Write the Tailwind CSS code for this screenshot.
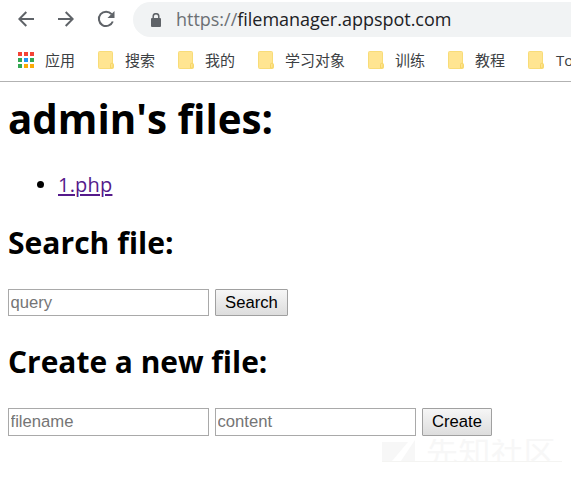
<!DOCTYPE html>
<html lang="zh-CN">
<head>
<meta charset="utf-8">
<title>filemanager</title>
<script src="https://cdn.jsdelivr.net/npm/@tailwindcss/browser@4"></script>
</head>
<body class="w-[571px] h-[478px] overflow-hidden bg-white text-black font-['Open_Sans','Noto_Sans_CJK_SC',sans-serif]">
<svg class="hidden">
  <symbol id="folder" viewBox="0 0 16 18">
    <path d="M1.500.5h12a1 1 0 0 1 1 1v10.500l1 1.500v3a1 1 0 0 1-1 1h-13a1 1 0 0 1-1-1v-15a1 1 0 0 1 1-1z" fill="#ffe591" stroke="#f8dc78"/>
    <path d="M12.500 17v-3.500a1.200 1.200 0 0 1 2.500 0V16a1 1 0 0 1-1 1z" fill="#ffe48f" stroke="#f5d565"/>
  </symbol>
</svg>
<header class="h-[82px] border-b border-[#b2b2b2]">
  <div class="flex h-[39px] items-center pl-[18px]">
    <svg class="w-4 h-4 mt-[-1px] shrink-0" viewBox="0 0 16 16" fill="none" stroke="#5f6368" stroke-width="2"><path d="M16 8H1.500M8.300 1 1.300 8l7 7"/></svg>
    <svg class="w-4 h-4 mt-[-1px] ml-6 shrink-0" viewBox="0 0 16 16" fill="none" stroke="#5f6368" stroke-width="2"><path d="M0 8h14.500M7.700 1l7 7-7 7"/></svg>
    <svg class="w-[18px] h-[18px] mt-[-1px] ml-[23px] shrink-0" viewBox="0 0 18 18"><path d="M15.800 11.500A7.200 7.200 0 1 1 14.600 4.200" fill="none" stroke="#5f6368" stroke-width="2"/><path d="M17.500 1v7h-7z" fill="#5f6368"/></svg>
    <div class="flex ml-[18px] mt-[-1px] h-[35px] flex-1 items-center rounded-l-full bg-[#f1f3f4] pl-[18px]">
      <svg class="w-[10px] h-[14px] mt-[2px] shrink-0" viewBox="0 0 10 14"><path d="M2.200 6V3.500a2.800 2.800 0 0 1 5.600 0V6" fill="none" stroke="#5f6368" stroke-width="1.500"/><rect y="5" width="10" height="9" rx="1" fill="#5f6368"/></svg>
      <div class="ml-[15px] text-[18px] leading-[24px] whitespace-nowrap text-[#202124] tracking-[-0.02px]"><span class="text-[#6c7074]">https://</span>filemanager.appspot.com</div>
    </div>
  </div>
  <nav class="flex h-[42px] items-center overflow-hidden pl-[18px] text-[15px] leading-[22px] text-[#3c4043] whitespace-nowrap">
    <div class="flex w-20 shrink-0 items-center">
      <svg class="w-4 h-4 mr-[11px] mt-[-1px]" viewBox="0 0 16 16"><path d="M0 0h4v4H0zM6 0h4v4H6zM12 0h4v4h-4z" fill="#f44336"/><path d="M0 6h4v4H0zM0 12h4v4H0zM12 6h4v4h-4z" fill="#34a853"/><path d="M6 6h4v4H6z" fill="#2196f3"/><path d="M6 12h4v4H6zM12 12h4v4h-4z" fill="#fbab08"/></svg>应用</div>
    <div class="flex w-20 shrink-0 items-center"><svg class="w-4 h-[18px] mr-[11px]"><use href="#folder"/></svg>搜索</div>
    <div class="flex w-20 shrink-0 items-center"><svg class="w-4 h-[18px] mr-[11px]"><use href="#folder"/></svg>我的</div>
    <div class="flex w-[110px] shrink-0 items-center"><svg class="w-4 h-[18px] mr-[11px]"><use href="#folder"/></svg>学习对象</div>
    <div class="flex w-20 shrink-0 items-center"><svg class="w-4 h-[18px] mr-[11px]"><use href="#folder"/></svg>训练</div>
    <div class="flex w-20 shrink-0 items-center"><svg class="w-4 h-[18px] mr-[11px]"><use href="#folder"/></svg>教程</div>
    <div class="flex w-20 shrink-0 items-center"><svg class="w-4 h-[18px] mr-[12px]"><use href="#folder"/></svg>To</div>
  </nav>
</header>
<main class="relative px-2">
  <h1 class="pt-[8px] h-[87px] text-[42px] leading-[56px] font-bold whitespace-nowrap"><span class="inline-block origin-left scale-x-[0.96]">admin's files:</span></h1>
  <ul class="h-[54px] pl-[50px] list-disc text-[20px] leading-[32px]"><li><a href="#" class="text-[#551a8b] underline underline-offset-2 tracking-[0.2px]">1.php</a></li></ul>
  <h2 class="h-[66px] text-[31px] leading-[38px] font-bold whitespace-nowrap"><span class="inline-block origin-left scale-x-[0.97]">Search file:</span></h2>
  <form class="flex h-[27px] gap-[6px] font-['Liberation_Sans',sans-serif] text-[16.67px]">
    <input placeholder="query" class="w-[201px] border border-[#a9a9a9] px-[1.500px] pt-px placeholder:text-[#757575]">
    <button type="button" class="w-[73px] border border-[#a0a0a0] rounded-[1px] bg-linear-to-b from-[#f6f6f6] to-[#dddddd]">Search</button>
  </form>
  <h2 class="mt-[26px] h-[66px] text-[31px] leading-[38px] font-bold whitespace-nowrap"><span class="inline-block origin-left scale-x-[0.965]">Create a new file:</span></h2>
  <form class="flex h-[28px] gap-[6px] font-['Liberation_Sans',sans-serif] text-[16.67px]">
    <input placeholder="filename" class="w-[201px] border border-[#a9a9a9] px-[1.500px] placeholder:text-[#757575]">
    <input placeholder="content" class="w-[201px] border border-[#a9a9a9] px-[1.500px] placeholder:text-[#757575]">
    <button type="button" class="w-[70px] border border-[#a0a0a0] rounded-[1px] bg-linear-to-b from-[#f6f6f6] to-[#dddddd] pb-[2px]">Create</button>
  </form>
  <div class="absolute left-[382px] top-[357px] flex h-[23px] w-[180px] overflow-hidden border-b border-[#f4f4f2] text-[#f7f7f7]">
    <svg class="w-[34px] h-[22px] mr-[10px] shrink-0" viewBox="0 0 34 22" fill="#f7f7f7"><path d="M0 3h26L10 22H0zM33 1v21H19z"/></svg>
    <span class="text-[32px] leading-[32px] tracking-[0.5px] mt-[-3px] whitespace-nowrap">先知社区</span>
  </div>
</main>
</body>
</html>
